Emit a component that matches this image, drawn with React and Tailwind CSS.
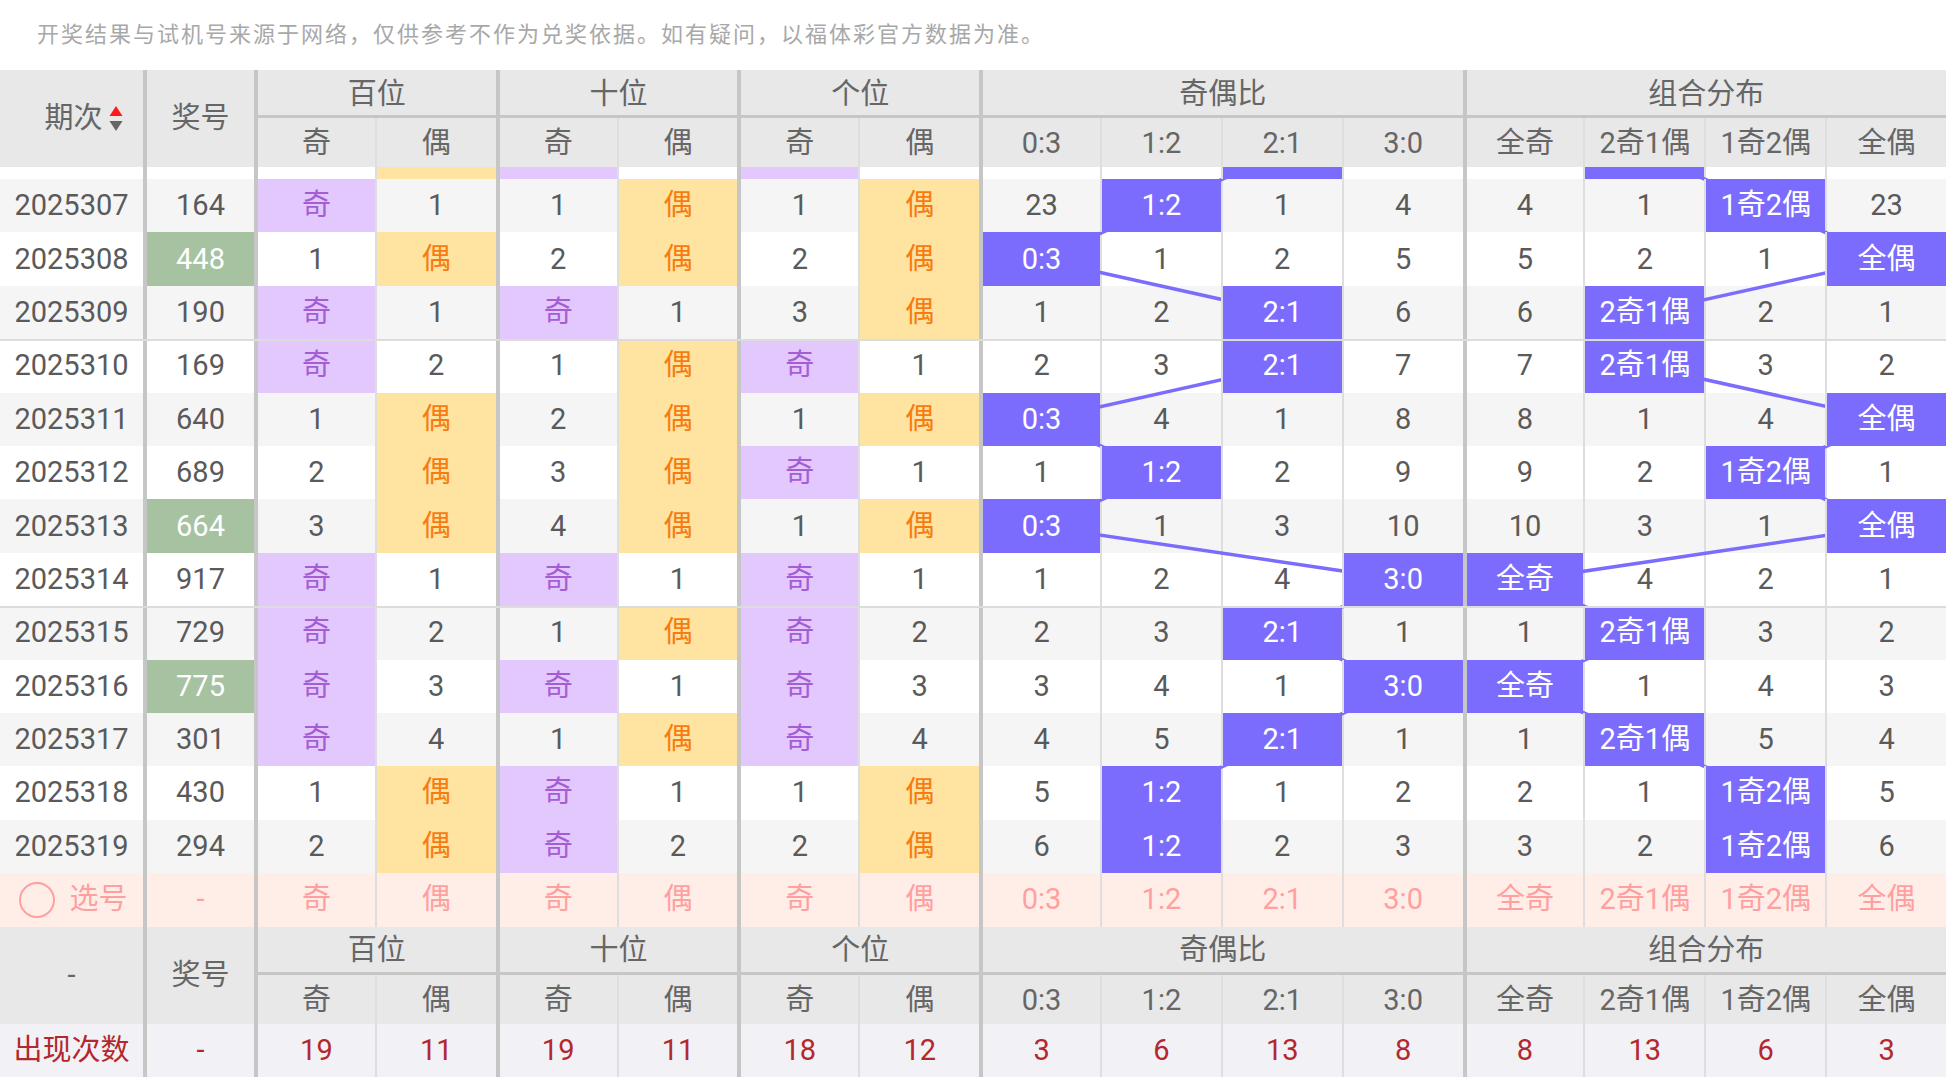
const ROW_H = 53.4;
const FR = (1946 - 254) / 14;
const GROUP_STARTS = [0, 2, 4, 6, 10];
const RATIO = ["0:3", "1:2", "2:1", "3:0"];
const COMBO = ["全奇", "2奇1偶", "1奇2偶", "全偶"];
const COLS = "grid grid-cols-[143px_111px_repeat(14,minmax(0,1fr))]";

// first row is 2025306, scrolled mostly under the header
const rows = [
  { issue: "2025306", num: "257", pos: [2, "偶", "奇", 3, "奇", 2], ratio: [22, 3, "2:1", 3], combo: [3, "2奇1偶", 3, 22] },
  { issue: "2025307", num: "164", pos: ["奇", 1, 1, "偶", 1, "偶"], ratio: [23, "1:2", 1, 4], combo: [4, 1, "1奇2偶", 23] },
  { issue: "2025308", num: "448", pos: [1, "偶", 2, "偶", 2, "偶"], ratio: ["0:3", 1, 2, 5], combo: [5, 2, 1, "全偶"] },
  { issue: "2025309", num: "190", pos: ["奇", 1, "奇", 1, 3, "偶"], ratio: [1, 2, "2:1", 6], combo: [6, "2奇1偶", 2, 1] },
  { issue: "2025310", num: "169", pos: ["奇", 2, 1, "偶", "奇", 1], ratio: [2, 3, "2:1", 7], combo: [7, "2奇1偶", 3, 2] },
  { issue: "2025311", num: "640", pos: [1, "偶", 2, "偶", 1, "偶"], ratio: ["0:3", 4, 1, 8], combo: [8, 1, 4, "全偶"] },
  { issue: "2025312", num: "689", pos: [2, "偶", 3, "偶", "奇", 1], ratio: [1, "1:2", 2, 9], combo: [9, 2, "1奇2偶", 1] },
  { issue: "2025313", num: "664", pos: [3, "偶", 4, "偶", 1, "偶"], ratio: ["0:3", 1, 3, 10], combo: [10, 3, 1, "全偶"] },
  { issue: "2025314", num: "917", pos: ["奇", 1, "奇", 1, "奇", 1], ratio: [1, 2, 4, "3:0"], combo: ["全奇", 4, 2, 1] },
  { issue: "2025315", num: "729", pos: ["奇", 2, 1, "偶", "奇", 2], ratio: [2, 3, "2:1", 1], combo: [1, "2奇1偶", 3, 2] },
  { issue: "2025316", num: "775", pos: ["奇", 3, "奇", 1, "奇", 3], ratio: [3, 4, 1, "3:0"], combo: ["全奇", 1, 4, 3] },
  { issue: "2025317", num: "301", pos: ["奇", 4, 1, "偶", "奇", 4], ratio: [4, 5, "2:1", 1], combo: [1, "2奇1偶", 5, 4] },
  { issue: "2025318", num: "430", pos: [1, "偶", "奇", 1, 1, "偶"], ratio: [5, "1:2", 1, 2], combo: [2, 1, "1奇2偶", 5] },
  { issue: "2025319", num: "294", pos: [2, "偶", "奇", 2, 2, "偶"], ratio: [6, "1:2", 2, 3], combo: [3, 2, "1奇2偶", 6] },
];

const counts = [19, 11, 19, 11, 18, 12, 3, 6, 13, 8, 8, 13, 6, 3];

const sideBorder = (i) =>
  GROUP_STARTS.includes(i)
    ? "border-l-4 border-[#c6c6c6]"
    : "border-l-2 border-[#dedede]";

const colCenter = (i) => {
  const b = GROUP_STARTS.includes(i) ? 4 : 2;
  return 254 + i * FR + b + (FR - b) / 2;
};

const isPair = (n) => new Set(n.split("")).size < 3;

function SortArrows() {
  return (
    <svg width="14" height="26" viewBox="0 0 14 26" className="ml-[6px]">
      <path d="M7 0 L13.5 10 L0.5 10 Z" fill="#ff1a1a" />
      <path d="M0.5 15 L13.5 15 L7 25 Z" fill="#666666" />
    </svg>
  );
}

function Header({ first }) {
  const groups = [
    ["百位", "col-span-2"],
    ["十位", "col-span-2"],
    ["个位", "col-span-2"],
    ["奇偶比", "col-span-4"],
    ["组合分布", "col-span-4"],
  ];
  const subs = ["奇", "偶", "奇", "偶", "奇", "偶", ...RATIO, ...COMBO];
  return (
    <div className={`${COLS} grid-rows-[48px_49px] bg-[#e8e8e8] text-[#666]`}>
      <div className="row-span-2 flex items-center justify-center">{first}</div>
      <div className="row-span-2 flex items-center justify-center border-l-4 border-[#c6c6c6]">
        奖号
      </div>
      {groups.map(([label, span]) => (
        <div
          key={label}
          className={`${span} flex items-center justify-center border-l-4 border-b-[3px] border-[#c6c6c6] pt-[3px]`}
        >
          {label}
        </div>
      ))}
      {subs.map((s, i) => (
        <div key={i} className={`flex items-center justify-center pt-[2px] ${sideBorder(i)}`}>
          {s}
        </div>
      ))}
    </div>
  );
}

function Cell({ value, i, hideText }) {
  let tone = "text-[#5a5a5a]";
  if (value === "奇") tone = "bg-[#e2c8fc] text-[#a55dd6]";
  else if (value === "偶") tone = "bg-[#ffe4a1] text-[#f67c12]";
  else if (RATIO.includes(value) || COMBO.includes(value))
    tone = "relative z-[2] bg-[#7b6cfe] text-white";
  return (
    <div className={`flex items-center justify-center ${sideBorder(i)} ${tone}`}>
      {hideText ? null : value}
    </div>
  );
}

function DataRow({ r, k }) {
  const bg = k % 2 === 1 ? "bg-[#f5f5f5]" : "bg-white";
  const cells = [...r.pos, ...r.ratio, ...r.combo];
  const last = r.issue.slice(-1);
  const hidden = k === 0;
  return (
    <div className={`relative ${COLS} h-[53.4px] ${bg}`}>
      <div className="flex items-center justify-center text-[#5a5a5a]">
        {hidden ? null : r.issue}
      </div>
      <div
        className={`flex items-center justify-center border-l-4 border-[#c6c6c6] ${
          isPair(r.num) ? "bg-[#a7c2a1] text-white" : "text-[#5a5a5a]"
        }`}
      >
        {hidden ? null : r.num}
      </div>
      {cells.map((c, i) => (
        <Cell key={i} value={c} i={i} hideText={hidden} />
      ))}
      {k > 0 && (last === "0" || last === "5") && (
        <div className="absolute inset-x-0 top-0 z-[3] h-[2px] bg-[#dcdcdc]" />
      )}
    </div>
  );
}

function TrendLines() {
  const ratioPts = rows
    .map((r, k) => {
      const idx = r.ratio.findIndex((v) => RATIO.includes(v));
      return `${colCenter(6 + idx)},${k * ROW_H + ROW_H / 2}`;
    })
    .join(" ");
  const comboPts = rows
    .map((r, k) => {
      const idx = r.combo.findIndex((v) => COMBO.includes(v));
      return `${colCenter(10 + idx)},${k * ROW_H + ROW_H / 2}`;
    })
    .join(" ");
  return (
    <svg
      className="pointer-events-none absolute left-0 top-0 z-[1]"
      width="1946"
      height={rows.length * ROW_H}
    >
      <polyline points={ratioPts} fill="none" stroke="#7b6cfe" strokeWidth="3.5" />
      <polyline points={comboPts} fill="none" stroke="#7b6cfe" strokeWidth="3.5" />
    </svg>
  );
}

export default function App() {
  const pick = ["奇", "偶", "奇", "偶", "奇", "偶", ...RATIO, ...COMBO];
  return (
    <div className="h-[1080px] w-[1946px] overflow-hidden bg-white font-['Roboto','Noto_Sans_CJK_SC',sans-serif] text-[29px] leading-none">
      <div className="flex h-[70px] items-center pl-[37px] text-[22px] tracking-[2px] text-[#a8a8a8]">
        开奖结果与试机号来源于网络，仅供参考不作为兑奖依据。如有疑问，以福体彩官方数据为准。
      </div>

      <Header
        first={
          <div className="flex items-center pl-6">
            期次
            <SortArrows />
          </div>
        }
      />

      <div className="h-[706.2px] overflow-hidden">
        <div className="relative -mt-[41.4px]">
          {rows.map((r, k) => (
            <DataRow key={r.issue} r={r} k={k} />
          ))}
          <TrendLines />
        </div>
      </div>

      <div className={`${COLS} h-[53.4px] bg-[#ffeee8] text-[#ffa0a0]`}>
        <div className="flex items-center justify-center gap-[14px] pl-1">
          <span className="h-[36px] w-[36px] rounded-full border-2 border-[#ffa0a0]" />
          选号
        </div>
        <div className="flex items-center justify-center border-l-4 border-[#c6c6c6]">-</div>
        {pick.map((p, i) => (
          <div key={i} className={`flex items-center justify-center ${sideBorder(i)}`}>
            {p}
          </div>
        ))}
      </div>

      <Header first="-" />

      <div className={`${COLS} h-[53.4px] bg-[#f2f1f6] text-[#b3282d]`}>
        <div className="flex items-center justify-center">出现次数</div>
        <div className="flex items-center justify-center border-l-4 border-[#c6c6c6]">-</div>
        {counts.map((c, i) => (
          <div key={i} className={`flex items-center justify-center ${sideBorder(i)}`}>
            {c}
          </div>
        ))}
      </div>
    </div>
  );
}
